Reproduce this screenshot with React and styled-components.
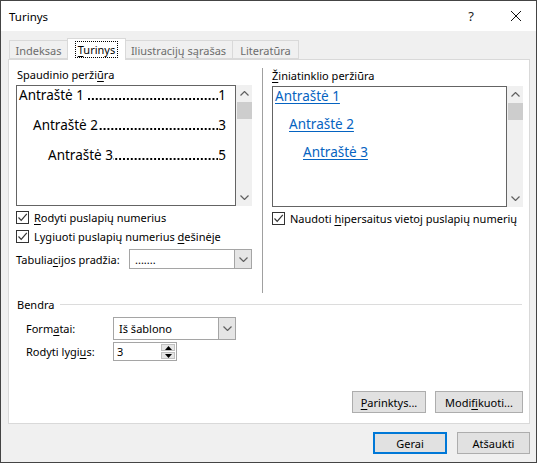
import styled, { createGlobalStyle } from "styled-components";

const GlobalStyle = createGlobalStyle`
  html, body {
    margin: 0;
    padding: 0;
    overflow: hidden;
    background: #ffffff;
  }
  * {
    box-sizing: border-box;
  }
`;

const FONT = `"Noto Sans", "Open Sans", Arial, sans-serif`;

const Window = styled.div`
  width: 537px;
  height: 463px;
  border: 1px solid #444444;
  background: #f0f0f0;
  display: flex;
  flex-direction: column;
  font-family: ${FONT};
  font-size: 11px;
  color: #000000;
`;

const TitleBar = styled.div`
  height: 30px;
  background: #ffffff;
  display: flex;
  align-items: center;
  padding-left: 8px;
`;

const Title = styled.div`
  flex: 1;
  font-size: 11.5px;
`;

const TitleButton = styled.div`
  width: ${(p) => p.$w}px;
  height: 30px;
  display: flex;
  align-items: center;
  justify-content: center;
  font-size: 13px;
  color: #222;
`;

const Body = styled.div`
  flex: 1;
  display: flex;
  flex-direction: column;
  padding: 7px 6px 0 7px;
`;

const TabStrip = styled.div`
  display: flex;
  align-items: flex-end;
  height: 21px;
  padding-left: 1px;
  position: relative;
  z-index: 1;
`;

const Tab = styled.div`
  width: ${(p) => p.$w}px;
  height: ${(p) => (p.$active ? 22 : 19)}px;
  margin-bottom: ${(p) => (p.$active ? -1 : 0)}px;
  margin-left: ${(p) => (p.$active ? -1 : 0)}px;
  margin-right: ${(p) => (p.$active ? -1 : 0)}px;
  background: ${(p) => (p.$active ? "#ffffff" : "#f0f0f0")};
  border: 1px solid #d9d9d9;
  border-bottom: ${(p) => (p.$active ? "none" : "1px solid #d9d9d9")};
  border-left: ${(p) => (p.$first || p.$active ? "1px solid #d9d9d9" : "none")};
  color: ${(p) => (p.$active ? "#000000" : "#6d6d6d")};
  display: flex;
  align-items: center;
  justify-content: center;
  padding-top: ${(p) => (p.$active ? 0 : 1)}px;
  white-space: nowrap;
  position: relative;
  z-index: ${(p) => (p.$active ? 2 : 1)};
`;

const Focus = styled.span`
  outline: 1px dotted #000;
  padding: 0 2px;
  line-height: 15px;
`;

const Key = styled.span`
  text-decoration: underline;
  text-underline-offset: 2px;
`;

const Panel = styled.div`
  height: 365px;
  background: #ffffff;
  border: 1px solid #d9d9d9;
  display: flex;
  flex-direction: column;
  padding: 7px 6px 10px 7px;
`;

const TopGrid = styled.div`
  display: grid;
  grid-template-columns: 246px 1fr;
  height: 226px;
`;

const Column = styled.div`
  display: flex;
  flex-direction: column;
  ${(p) =>
    p.$divided &&
    `
    border-left: 1px solid #a0a0a0;
    padding-left: 9px;
    margin-top: 1px;
  `}
`;

const SectionLabel = styled.div`
  height: 18px;
  line-height: 16px;
  padding-left: ${(p) => p.$pad || 0}px;
`;

const PreviewRow = styled.div`
  display: flex;
  height: 121px;
`;

const PreviewBox = styled.div`
  width: ${(p) => p.$w}px;
  border: 1px solid #646464;
  display: flex;
  flex-direction: column;
  gap: ${(p) => p.$gap}px;
  padding: 0 9px 0 2px;
  font-size: 13.5px;
  line-height: 18px;
  overflow: hidden;
`;

const TocLine = styled.div`
  display: flex;
  padding-left: ${(p) => p.$indent}px;
  white-space: nowrap;
`;

const Dots = styled.span`
  flex: 1;
  margin: 0 0 0 ${(p) => (p.$space ? 4 : 0)}px;
  background-image: linear-gradient(to right, transparent 2.3px, #000 2.3px);
  background-size: 3.9px 1.6px;
  background-repeat: repeat-x;
  background-position: right 0 bottom 4px;
`;

const LinkLine = styled.a`
  display: inline-block;
  color: #0563c1;
  text-decoration: underline;
  text-underline-offset: 2px;
  white-space: nowrap;
`;

const LinkWrap = styled.div`
  padding-left: ${(p) => p.$indent}px;
`;

const ScrollBar = styled.div`
  width: 16px;
  background: #f0f0f0;
  display: flex;
  flex-direction: column;
  align-items: center;
`;

const ScrollArrow = styled.div`
  height: 17px;
  width: 16px;
  display: flex;
  align-items: center;
  justify-content: center;
`;

const ScrollThumb = styled.div`
  width: 15px;
  height: 17px;
  background: #cdcdcd;
`;

const ScrollTrack = styled.div`
  flex: 1;
`;

const CheckRow = styled.label`
  display: flex;
  align-items: center;
  height: 19px;
  gap: 5px;
  margin-top: ${(p) => p.$top || 0}px;
  white-space: nowrap;
`;

const CheckBox = styled.span`
  width: 13px;
  height: 13px;
  border: 1px solid #333333;
  background: #ffffff;
  display: flex;
  align-items: center;
  justify-content: center;
  flex: none;
`;

const FieldRow = styled.div`
  display: flex;
  align-items: center;
  height: ${(p) => p.$h}px;
  margin-top: ${(p) => p.$top || 0}px;
`;

const FieldLabel = styled.div`
  width: ${(p) => p.$w}px;
  flex: none;
  white-space: nowrap;
`;

const Combo = styled.div`
  width: ${(p) => p.$w}px;
  height: 100%;
  border: 1px solid #a5a5a5;
  background: #ffffff;
  display: flex;
  align-items: stretch;
`;

const ComboText = styled.div`
  flex: 1;
  display: flex;
  align-items: center;
  padding-left: 5px;
`;

const ComboButton = styled.div`
  width: 17px;
  background: #e5e5e5;
  border-left: 1px solid #a5a5a5;
  display: flex;
  align-items: center;
  justify-content: center;
`;

const Spinner = styled.div`
  width: 64px;
  height: 19px;
  border: 1px solid #a5a5a5;
  background: #ffffff;
  display: flex;
`;

const SpinText = styled.div`
  flex: 1;
  display: flex;
  align-items: center;
  padding-left: 3px;
`;

const SpinButtons = styled.div`
  width: 16px;
  display: flex;
  flex-direction: column;
  gap: 1px;
  padding: 1px;
`;

const SpinButton = styled.div`
  flex: 1;
  background: #e5e5e5;
  border: 1px solid #c0c0c0;
  display: flex;
  align-items: center;
  justify-content: center;
`;

const GroupHeader = styled.div`
  display: flex;
  align-items: center;
  height: 16px;
  margin-top: 3px;
  padding-left: 1px;
`;

const GroupLine = styled.div`
  flex: 1;
  height: 1px;
  background: #dcdcdc;
  margin: 1px 1px 0 6px;
`;

const Group = styled.div`
  padding-left: 10px;
`;

const ButtonRow = styled.div`
  margin-top: auto;
  display: flex;
  justify-content: flex-end;
  gap: ${(p) => p.$gap}px;
`;

const Button = styled.button`
  width: ${(p) => p.$w}px;
  height: 22px;
  font-family: ${FONT};
  font-size: 11px;
  color: #000;
  background: #e1e1e1;
  border: ${(p) => (p.$default ? "2px solid #0078d7" : "1px solid #adadad")};
  padding: 0;
  display: flex;
  align-items: center;
  justify-content: center;
`;

const Footer = styled.div`
  display: flex;
  justify-content: flex-end;
  gap: 10px;
  padding-top: 8px;
`;

const Chevron = ({ up }) => (
  <svg width="9" height="5" viewBox="0 0 9 5">
    <path
      d={up ? "M0.5 4.5 L4.5 0.5 L8.5 4.5" : "M0.5 0.5 L4.5 4.5 L8.5 0.5"}
      fill="none"
      stroke="#606060"
      strokeWidth="1.2"
    />
  </svg>
);

const Triangle = ({ up }) => (
  <svg width="7" height="4" viewBox="0 0 7 4">
    <path d={up ? "M0 4 L3.5 0 L7 4 Z" : "M0 0 L3.5 4 L7 0 Z"} fill="#000" />
  </svg>
);

const Check = () => (
  <svg width="11" height="11" viewBox="0 0 11 11">
    <path d="M1.5 5.5 L4.2 8.3 L9.8 1.8" fill="none" stroke="#333" strokeWidth="1.2" />
  </svg>
);

const CloseIcon = () => (
  <svg width="10" height="10" viewBox="0 0 10 10">
    <path d="M0 0 L10 10 M10 0 L0 10" stroke="#111" strokeWidth="1" />
  </svg>
);

const Scroll = () => (
  <ScrollBar>
    <ScrollArrow>
      <Chevron up />
    </ScrollArrow>
    <ScrollThumb />
    <ScrollTrack />
    <ScrollArrow>
      <Chevron />
    </ScrollArrow>
  </ScrollBar>
);

const toc = [
  { title: "Antraštė 1", page: 1, indent: 0, link: 0 },
  { title: "Antraštė 2", page: 3, indent: 14, link: 14 },
  { title: "Antraštė 3", page: 5, indent: 29, link: 28 },
];

export default function App() {
  return (
    <>
      <GlobalStyle />
      <Window>
        <TitleBar>
          <Title>Turinys</Title>
          <TitleButton $w={50}>?</TitleButton>
          <TitleButton $w={40}>
            <CloseIcon />
          </TitleButton>
        </TitleBar>

        <Body>
          <TabStrip>
            <Tab $w={59} $first>Indeksas</Tab>
            <Tab $w={59} $active>
              <Focus>
                <Key>T</Key>urinys
              </Focus>
            </Tab>
            <Tab $w={108}>Iliustracijų sąrašas</Tab>
            <Tab $w={66}>Literatūra</Tab>
          </TabStrip>

          <Panel>
            <TopGrid>
              <Column>
                <SectionLabel $pad={1}>
                  Spaudinio perži<Key>ū</Key>ra
                </SectionLabel>
                <PreviewRow>
                  <PreviewBox $w={220} $gap={12}>
                    {toc.map((t, i) => (
                      <TocLine key={t.title} $indent={t.indent}>
                        <span>{t.title}</span>
                        <Dots $space={i === 0} />
                        <span>{t.page}</span>
                      </TocLine>
                    ))}
                  </PreviewBox>
                  <Scroll />
                </PreviewRow>
                <CheckRow $top={2}>
                  <CheckBox>
                    <Check />
                  </CheckBox>
                  <span>
                    <Key>R</Key>odyti puslapių numerius
                  </span>
                </CheckRow>
                <CheckRow>
                  <CheckBox>
                    <Check />
                  </CheckBox>
                  <span>
                    Lygiuoti puslapių numerius <Key>d</Key>ešinėje
                  </span>
                </CheckRow>
                <FieldRow $h={20} $top={3}>
                  <FieldLabel $w={113}>
                    Tabulia<Key>c</Key>ijos pradžia:
                  </FieldLabel>
                  <Combo $w={123}>
                    <ComboText>.......</ComboText>
                    <ComboButton>
                      <Chevron />
                    </ComboButton>
                  </Combo>
                </FieldRow>
              </Column>

              <Column $divided>
                <SectionLabel>
                  <Key>Ž</Key>iniatinklio peržiūra
                </SectionLabel>
                <PreviewRow>
                  <PreviewBox $w={235} $gap={10}>
                    {toc.map((t) => (
                      <LinkWrap key={t.title} $indent={t.link}>
                        <LinkLine href="#">{t.title}</LinkLine>
                      </LinkWrap>
                    ))}
                  </PreviewBox>
                  <Scroll />
                </PreviewRow>
                <CheckRow $top={2}>
                  <CheckBox>
                    <Check />
                  </CheckBox>
                  <span>
                    Naudoti <Key>h</Key>ipersaitus vietoj puslapių numerių
                  </span>
                </CheckRow>
              </Column>
            </TopGrid>

            <GroupHeader>
              <span>Bendra</span>
              <GroupLine />
            </GroupHeader>
            <Group>
              <FieldRow $h={23} $top={5}>
                <FieldLabel $w={87}>
                  Form<Key>a</Key>tai:
                </FieldLabel>
                <Combo $w={123}>
                  <ComboText>Iš šablono</ComboText>
                  <ComboButton>
                    <Chevron />
                  </ComboButton>
                </Combo>
              </FieldRow>
              <FieldRow $h={19} $top={2}>
                <FieldLabel $w={87}>
                  Rodyti lygi<Key>u</Key>s:
                </FieldLabel>
                <Spinner>
                  <SpinText>3</SpinText>
                  <SpinButtons>
                    <SpinButton>
                      <Triangle up />
                    </SpinButton>
                    <SpinButton>
                      <Triangle />
                    </SpinButton>
                  </SpinButtons>
                </Spinner>
              </FieldRow>
            </Group>

            <ButtonRow $gap={9}>
              <Button $w={74}>
                <span>
                  <Key>P</Key>arinktys...
                </span>
              </Button>
              <Button $w={88}>
                <span>
                  Modi<Key>f</Key>ikuoti...
                </span>
              </Button>
            </ButtonRow>
          </Panel>

          <Footer>
            <Button $w={74} $default>
              Gerai
            </Button>
            <Button $w={73}>Atšaukti</Button>
          </Footer>
        </Body>
      </Window>
    </>
  );
}
